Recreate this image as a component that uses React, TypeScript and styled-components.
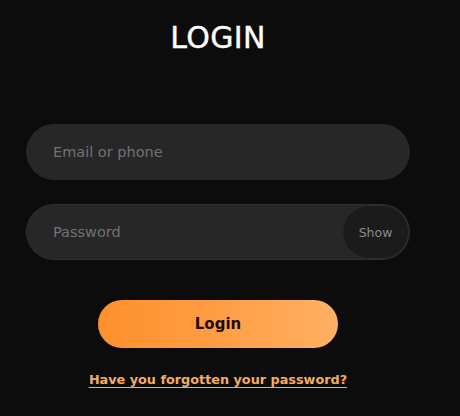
import React, { useState } from 'react';
import styled, { createGlobalStyle } from 'styled-components';

const GlobalStyle = createGlobalStyle`
  html, body {
    margin: 0;
    padding: 0;
    background: #0c0c0c;
  }
  body {
    font-family: 'DejaVu Sans', 'Liberation Sans', sans-serif;
  }
`;

const Page = styled.div`
  width: 436px;
  min-height: 416px;
  box-sizing: border-box;
  padding: 18px 26px 0;
  display: flex;
  flex-direction: column;
  align-items: center;
`;

const Title = styled.h1`
  margin: 0;
  font-size: 30px;
  line-height: 40px;
  font-weight: 400;
  color: #ffffff;
  letter-spacing: 0.3px;
  -webkit-text-stroke: 0.4px #ffffff;
`;

const Form = styled.form`
  width: 100%;
  margin-top: 66px;
  display: flex;
  flex-direction: column;
  align-items: center;
`;

const Field = styled.div<{ $bordered?: boolean }>`
  width: 100%;
  height: 56px;
  box-sizing: border-box;
  border-radius: 28px;
  background: #272727;
  border: 1px solid ${(p) => (p.$bordered ? '#2f2f2f' : '#272727')};
  display: flex;
  align-items: center;
  margin-bottom: 24px;
  overflow: hidden;
`;

const Input = styled.input`
  flex: 1;
  min-width: 0;
  height: 100%;
  background: transparent;
  border: none;
  outline: none;
  padding: 0 0 0 26px;
  font-family: inherit;
  font-size: 14.5px;
  color: #dddddd;

  &::placeholder {
    color: #727272;
  }
`;

const ShowButton = styled.button`
  width: 67px;
  height: 54px;
  flex: none;
  border-radius: 27px;
  background: #1b1b1b;
  border: 1px solid #2c2c2c;
  color: #8a8a8a;
  font-family: inherit;
  font-size: 12.5px;
  cursor: pointer;
  padding: 0;
`;

const LoginButton = styled.button`
  margin-top: 16px;
  width: 240px;
  height: 48px;
  border: none;
  border-radius: 24px;
  background: linear-gradient(90deg, #fe902c 0%, #fe9c42 45%, #ffb062 100%);
  color: #1e0b0b;
  font-family: inherit;
  font-size: 15px;
  font-weight: 700;
  cursor: pointer;
`;

const ForgotLink = styled.a`
  margin-top: 24px;
  font-size: 12.8px;
  font-weight: 700;
  color: #f4ab66;
  text-decoration: underline;
  text-underline-offset: 3px;
  cursor: pointer;
`;

export default function App() {
  const [visible, setVisible] = useState(false);

  return (
    <>
      <GlobalStyle />
      <Page>
        <Title>LOGIN</Title>
        <Form onSubmit={(e) => e.preventDefault()}>
          <Field>
            <Input type="text" placeholder="Email or phone" />
          </Field>
          <Field $bordered>
            <Input type={visible ? 'text' : 'password'} placeholder="Password" />
            <ShowButton type="button" onClick={() => setVisible((v) => !v)}>
              {visible ? 'Hide' : 'Show'}
            </ShowButton>
          </Field>
          <LoginButton type="submit">Login</LoginButton>
          <ForgotLink>Have you forgotten your password?</ForgotLink>
        </Form>
      </Page>
    </>
  );
}
